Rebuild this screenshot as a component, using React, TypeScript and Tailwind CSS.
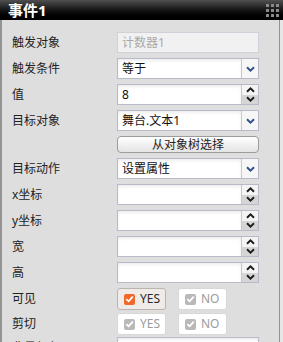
import type { ReactNode } from 'react'

function ChevronDown({ className = '' }: { className?: string }) {
  return (
    <svg width="9" height="6" viewBox="0 0 9 6" className={className} aria-hidden>
      <path d="M1 1.2 L4.5 4.6 L8 1.2" fill="none" stroke="currentColor" strokeWidth="1.9" />
    </svg>
  )
}

function ChevronUp({ className = '' }: { className?: string }) {
  return (
    <svg width="9" height="6" viewBox="0 0 9 6" className={className} aria-hidden>
      <path d="M1 4.8 L4.5 1.4 L8 4.8" fill="none" stroke="currentColor" strokeWidth="1.9" />
    </svg>
  )
}

function Check() {
  return (
    <svg width="9" height="8" viewBox="0 0 9 8" aria-hidden>
      <path d="M1.3 4.2 L3.6 6.3 L7.8 1.6" fill="none" stroke="white" strokeWidth="1.8" />
    </svg>
  )
}

function Row({ label, children, h = 'h-[21px]' }: { label: string; children: ReactNode; h?: string }) {
  return (
    <div className={`flex items-center ${h}`}>
      <div className="w-[115px] shrink-0 pl-[10px] text-[12px] text-[#222]">{label}</div>
      {children}
    </div>
  )
}

function Field({
  value = '',
  kind = 'text',
  disabled = false
}: {
  value?: string
  kind?: 'text' | 'select' | 'spin'
  disabled?: boolean
}) {
  return (
    <div
      className={`flex h-[21px] w-[142px] border ${
        disabled ? 'border-[#cfd0d8] bg-[#f1f1f1]' : 'border-[#b7bac9] bg-white'
      }`}
    >
      <div
        className={`flex flex-1 items-center pl-[4px] text-[12px] ${
          disabled ? 'text-[#a9a9a9]' : 'text-[#111] shadow-[inset_0_2px_3px_rgba(0,0,0,0.07)]'
        }`}
      >
        {value}
      </div>
      {kind === 'select' && (
        <div className="flex w-[17px] items-center justify-center border-l border-[#c5c7d2] bg-[#f6f6f6] text-[#2f4f8a]">
          <ChevronDown />
        </div>
      )}
      {kind === 'spin' && (
        <div className="flex w-[17px] flex-col border-l border-[#c5c7d2] text-[#1c1c1c]">
          <div className="flex flex-1 items-center justify-center bg-[#f4f4f4]">
            <ChevronUp />
          </div>
          <div className="flex flex-1 items-center justify-center bg-[#d5d5d5]">
            <ChevronDown />
          </div>
        </div>
      )}
    </div>
  )
}

function Toggle({ label, on = false }: { label: string; on?: boolean }) {
  return (
    <div
      className={`flex h-[22px] w-[49px] items-center gap-[5px] rounded-[3px] border pl-[6px] text-[12px] ${
        on ? 'border-[#bcb5af] bg-[#efebe8] text-[#2a2a2a]' : 'border-[#d8d8d8] bg-white text-[#9c9c9c]'
      }`}
    >
      <span
        className={`flex h-[11px] w-[11px] items-center justify-center rounded-[2px] ${
          on ? 'bg-[#f0692a]' : 'bg-[#b9b9b9]'
        }`}
      >
        <Check />
      </span>
      {label}
    </div>
  )
}

export default function App() {
  return (
    <div className="h-[342px] w-[283px] overflow-hidden bg-[#e6e6e6] font-['Noto_Sans','Noto_Sans_CJK_SC',sans-serif] leading-none">
      <header className="flex h-[20px] items-center justify-between bg-gradient-to-b from-[#505050] via-[#161616] to-black pl-[8px] pr-[4px]">
        <span className="text-[15px] font-bold text-white">事件1</span>
        <div className="grid grid-cols-3 gap-[2px]">
          {Array.from({ length: 9 }).map((_, i) => (
            <span key={i} className="h-[3px] w-[3px] bg-[#8a8a8a]" />
          ))}
        </div>
      </header>

      <div className="flex h-[322px]">
        <div className="flex w-[280px] flex-col gap-[5px] border-l-2 border-r border-[#939393] bg-[#dedede] pt-[12px]">
          <Row label="触发对象">
            <Field value="计数器1" disabled />
          </Row>
          <Row label="触发条件">
            <Field value="等于" kind="select" />
          </Row>
          <Row label="值">
            <Field value="8" kind="spin" />
          </Row>
          <Row label="目标对象">
            <Field value="舞台.文本1" kind="select" />
          </Row>
          <Row label="" h="h-[17px]">
            <button className="flex h-[17px] w-[142px] items-center justify-center rounded-[4px] border border-[#9c9c9c] bg-gradient-to-b from-white to-[#e4e4e4] text-[12px] text-[#222]">
              从对象树选择
            </button>
          </Row>
          <Row label="目标动作">
            <Field value="设置属性" kind="select" />
          </Row>
          <Row label="x坐标">
            <Field kind="spin" />
          </Row>
          <Row label="y坐标">
            <Field kind="spin" />
          </Row>
          <Row label="宽">
            <Field kind="spin" />
          </Row>
          <Row label="高">
            <Field kind="spin" />
          </Row>
          <div className="flex flex-col gap-[3px]">
            <Row label="可见" h="h-[22px]">
              <div className="flex gap-[12px]">
                <Toggle label="YES" on />
                <Toggle label="NO" />
              </div>
            </Row>
            <Row label="剪切" h="h-[22px]">
              <div className="flex gap-[12px]">
                <Toggle label="YES" />
                <Toggle label="NO" />
              </div>
            </Row>
            <div className="mt-[-1px]">
              <Row label="背景颜色">
                <Field />
              </Row>
            </div>
          </div>
        </div>
        <div className="flex-1 bg-[#e6e6e6]" />
      </div>
    </div>
  )
}
